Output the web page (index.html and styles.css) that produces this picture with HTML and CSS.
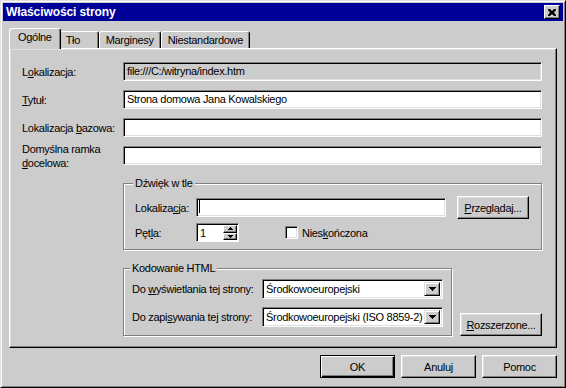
FILE: index.html
```html
<!DOCTYPE html>
<html lang="pl">
<head>
    <meta charset="UTF-8">
    <title>Właściwości strony</title>
    <link rel="stylesheet" href="styles.css">
</head>
<body>

    <div class="window">
        <div class="titlebar">
            <span>Właściwości strony</span>
            <div class="close">
                <svg width="8" height="7" viewBox="0 0 8 7"><path d="M0 0h2l2 2 2-2h2v1l-2 2.5 2 2.5v1h-2l-2-2-2 2h-2v-1l2-2.5-2-2.5z" fill="#000"/></svg>
            </div>
        </div>

        <div class="body">
            <div class="tabs">
                <div class="tab active">Ogólne</div>
                <div class="tab">Tło</div>
                <div class="tab">Marginesy</div>
                <div class="tab">Niestandardowe</div>
            </div>

            <div class="panel">
                <div class="fields">
                    <div class="label">L<u>o</u>kalizacja:</div>
                    <div class="field readonly">file:///C:/witryna/index.htm</div>

                    <div class="label"><u>T</u>ytuł:</div>
                    <div class="field">Strona domowa Jana Kowalskiego</div>

                    <div class="label">Lokalizacja <u>b</u>azowa:</div>
                    <div class="field"></div>

                    <div class="label">Domyślna ramka<br><u>d</u>ocelowa:</div>
                    <div class="field"></div>
                </div>

                <fieldset class="group sound">
                    <legend>Dźwięk w tle</legend>
                    <div class="group-row">
                        <div class="group-label">Lokaliza<u>c</u>ja:</div>
                        <div class="field grow"><span class="caret"></span></div>
                        <div class="btn browse"><u>P</u>rzeglądaj...</div>
                    </div>
                    <div class="group-row loop">
                        <div class="group-label">Pęt<u>l</u>a:</div>
                        <div class="spin">
                            <div class="spin-val">1</div>
                            <div class="spin-btns">
                                <div class="spin-btn"><svg width="5" height="3" viewBox="0 0 5 3"><path d="M2 0h1v1h1v1h1v1h-5v-1h1v-1h1z" fill="#000"/></svg></div>
                                <div class="spin-btn"><svg width="5" height="3" viewBox="0 0 5 3"><path d="M0 0h5v1h-1v1h-1v1h-1v-1h-1v-1h-1z" fill="#000"/></svg></div>
                            </div>
                        </div>
                        <div class="check"></div>
                        <div>Nies<u>k</u>ończona</div>
                    </div>
                </fieldset>

                <div class="lower">
                    <fieldset class="group encoding">
                        <legend>Kodowanie HTML</legend>
                        <div class="enc-row">
                            <div class="enc-label">Do <u>w</u>yświetlania tej strony:</div>
                            <div class="select">
                                <div class="select-text">Środkowoeuropejski</div>
                                <div class="select-btn"><svg width="7" height="4" viewBox="0 0 7 4"><path d="M0 0h7v1h-1v1h-1v1h-1v1h-1v-1h-1v-1h-1v-1h-1z" fill="#000"/></svg></div>
                            </div>
                        </div>
                        <div class="enc-row">
                            <div class="enc-label">Do zapi<u>s</u>ywania tej strony:</div>
                            <div class="select">
                                <div class="select-text">Środkowoeuropejski (ISO 8859-2)</div>
                                <div class="select-btn"><svg width="7" height="4" viewBox="0 0 7 4"><path d="M0 0h7v1h-1v1h-1v1h-1v1h-1v-1h-1v-1h-1v-1h-1z" fill="#000"/></svg></div>
                            </div>
                        </div>
                    </fieldset>
                    <div class="btn advanced"><u>R</u>ozszerzone...</div>
                </div>
            </div>

            <div class="buttons">
                <div class="btn dialog default">OK</div>
                <div class="btn dialog">Anuluj</div>
                <div class="btn dialog">Pomoc</div>
            </div>
        </div>
    </div>

</body>
</html>
```

FILE: styles.css
```css
* {
    box-sizing: border-box;
}

body {
    margin: 0;
    background-color: #cccccc;
    font-family: "Liberation Sans", Arial, sans-serif;
    font-size: 11px;
    letter-spacing: -0.3px;
    color: #000;
}

u {
    text-decoration-thickness: 1px;
    text-underline-offset: 1px;
}

.window {
    width: 566px;
    height: 388px;
    background-color: #cccccc;
    border: 1px solid;
    border-color: #dfdfdf #000 #000 #dfdfdf;
    box-shadow: inset 1px 1px #fff, inset -1px -1px #808080;
    padding: 2px;
    display: flex;
    flex-direction: column;
}

/* title bar */
.titlebar {
    height: 18px;
    background-color: #000099;
    color: #fff;
    font-weight: bold;
    font-size: 12px;
    letter-spacing: -0.1px;
    display: flex;
    align-items: center;
    justify-content: space-between;
    padding: 0 3px 0 3px;
}

.close {
    width: 16px;
    height: 14px;
    background-color: #cccccc;
    border: 1px solid;
    border-color: #fff #000 #000 #fff;
    box-shadow: inset -1px -1px #808080;
    display: flex;
    align-items: center;
    justify-content: center;
    padding-right: 1px;
}

.close svg {
    display: block;
}

.body {
    flex: 1;
    padding: 7px 6px 0;
    display: flex;
    flex-direction: column;
}

/* tabs */
.tabs {
    display: flex;
    align-items: flex-end;
    height: 20px;
    padding-left: 2px;
}

.tab {
    height: 17px;
    min-width: 40px;
    padding: 0 6px;
    border: 1px solid;
    border-bottom: none;
    border-color: #fff #000 transparent #fff;
    border-radius: 3px 3px 0 0;
    box-shadow: inset -1px 0 #808080;
    line-height: 16px;
    background-color: #cccccc;
}

.tab.active {
    position: relative;
    z-index: 1;
    height: 21px;
    margin: 0 -2px -1px;
    padding: 0 8px;
    line-height: 17px;
}

.panel {
    height: 300px;
    border: 1px solid;
    border-color: #fff #000 #000 #fff;
    box-shadow: inset -1px -1px #808080, inset 1px 1px #dfdfdf;
    padding: 13px 14px 0 12px;
}

/* top fields */
.fields {
    display: grid;
    grid-template-columns: 101px 1fr;
    grid-auto-rows: 19px;
    row-gap: 9px;
    align-items: center;
}

.label {
    line-height: 14px;
    white-space: nowrap;
}

.field {
    height: 19px;
    background-color: #fff;
    border: 1px solid;
    border-color: #808080 #fff #fff #808080;
    box-shadow: inset 1px 1px #000, inset -1px -1px #dfdfdf;
    padding: 0 3px;
    line-height: 17px;
    white-space: nowrap;
    overflow: hidden;
}

.field.readonly {
    background-color: #cccccc;
}

.caret {
    display: inline-block;
    width: 1px;
    height: 13px;
    background-color: #000;
    vertical-align: -2px;
    margin-left: -1px;
}

/* group boxes */
.group {
    margin: 0;
    border: 1px solid #808080;
    box-shadow: inset 1px 1px #fff, 1px 1px #fff;
}

.group legend {
    padding: 0 2px;
    margin-left: -2px;
    background-color: #cccccc;
    line-height: 13px;
}

.sound {
    width: 419px;
    margin-left: 101px;
    margin-top: 12px;
    padding: 6px 12px 7px 11px;
}

.group-row {
    display: flex;
    align-items: center;
}

.group-row.loop {
    margin-top: 4px;
}

.group-label {
    width: 61px;
}

.grow {
    flex: 1;
    margin-right: 11px;
}

.btn {
    height: 23px;
    background-color: #cccccc;
    border: 1px solid;
    border-color: #fff #000 #000 #fff;
    box-shadow: inset -1px -1px #808080, inset 1px 1px #dfdfdf;
    display: flex;
    align-items: center;
    justify-content: center;
}

.browse {
    width: 72px;
}

.spin {
    width: 43px;
    height: 19px;
    background-color: #fff;
    border: 1px solid;
    border-color: #808080 #fff #fff #808080;
    box-shadow: inset 1px 1px #000;
    display: flex;
    padding: 1px 1px 1px 1px;
}

.spin-val {
    flex: 1;
    padding-left: 2px;
    line-height: 16px;
}

.spin-btns {
    width: 14px;
    display: flex;
    flex-direction: column;
}

.spin-btn {
    flex: 1;
    background-color: #cccccc;
    border: 1px solid;
    border-color: #fff #000 #000 #fff;
    box-shadow: inset -1px -1px #808080;
    display: flex;
    align-items: center;
    justify-content: center;
}

.spin-btn svg {
    display: block;
}

.check {
    width: 13px;
    height: 13px;
    margin-left: 46px;
    margin-right: 4px;
    background-color: #fff;
    border: 1px solid;
    border-color: #808080 #fff #fff #808080;
    box-shadow: inset 1px 1px #000, inset -1px -1px #dfdfdf;
}

/* lower part */
.lower {
    display: flex;
    align-items: flex-end;
    gap: 8px;
    margin-left: 101px;
    margin-top: 12px;
}

.encoding {
    width: 329px;
    padding: 4px 8px 8px 8px;
}

.enc-row {
    display: flex;
    align-items: center;
}

.enc-row + .enc-row {
    margin-top: 8px;
}

.enc-label {
    width: 130px;
    white-space: nowrap;
}

.select {
    width: 181px;
    height: 20px;
    background-color: #fff;
    border: 1px solid;
    border-color: #808080 #fff #fff #808080;
    box-shadow: inset 1px 1px #000, inset -1px -1px #dfdfdf;
    display: flex;
    padding: 2px;
}

.select-text {
    flex: 1;
    padding-left: 1px;
    line-height: 15px;
    white-space: nowrap;
    overflow: hidden;
}

.select-btn {
    width: 16px;
    background-color: #cccccc;
    border: 1px solid;
    border-color: #dfdfdf #000 #000 #dfdfdf;
    box-shadow: inset 1px 1px #fff, inset -1px -1px #808080;
    display: flex;
    align-items: center;
    justify-content: center;
}

.select-btn svg {
    display: block;
}

.advanced {
    width: 82px;
}

/* dialog buttons */
.buttons {
    display: flex;
    justify-content: flex-end;
    gap: 6px;
    margin-top: 7px;
}

.dialog {
    width: 75px;
}

.dialog.default {
    border-color: #000;
    box-shadow: inset 1px 1px #fff, inset -1px -1px #000, inset -2px -2px #808080;
}
```
